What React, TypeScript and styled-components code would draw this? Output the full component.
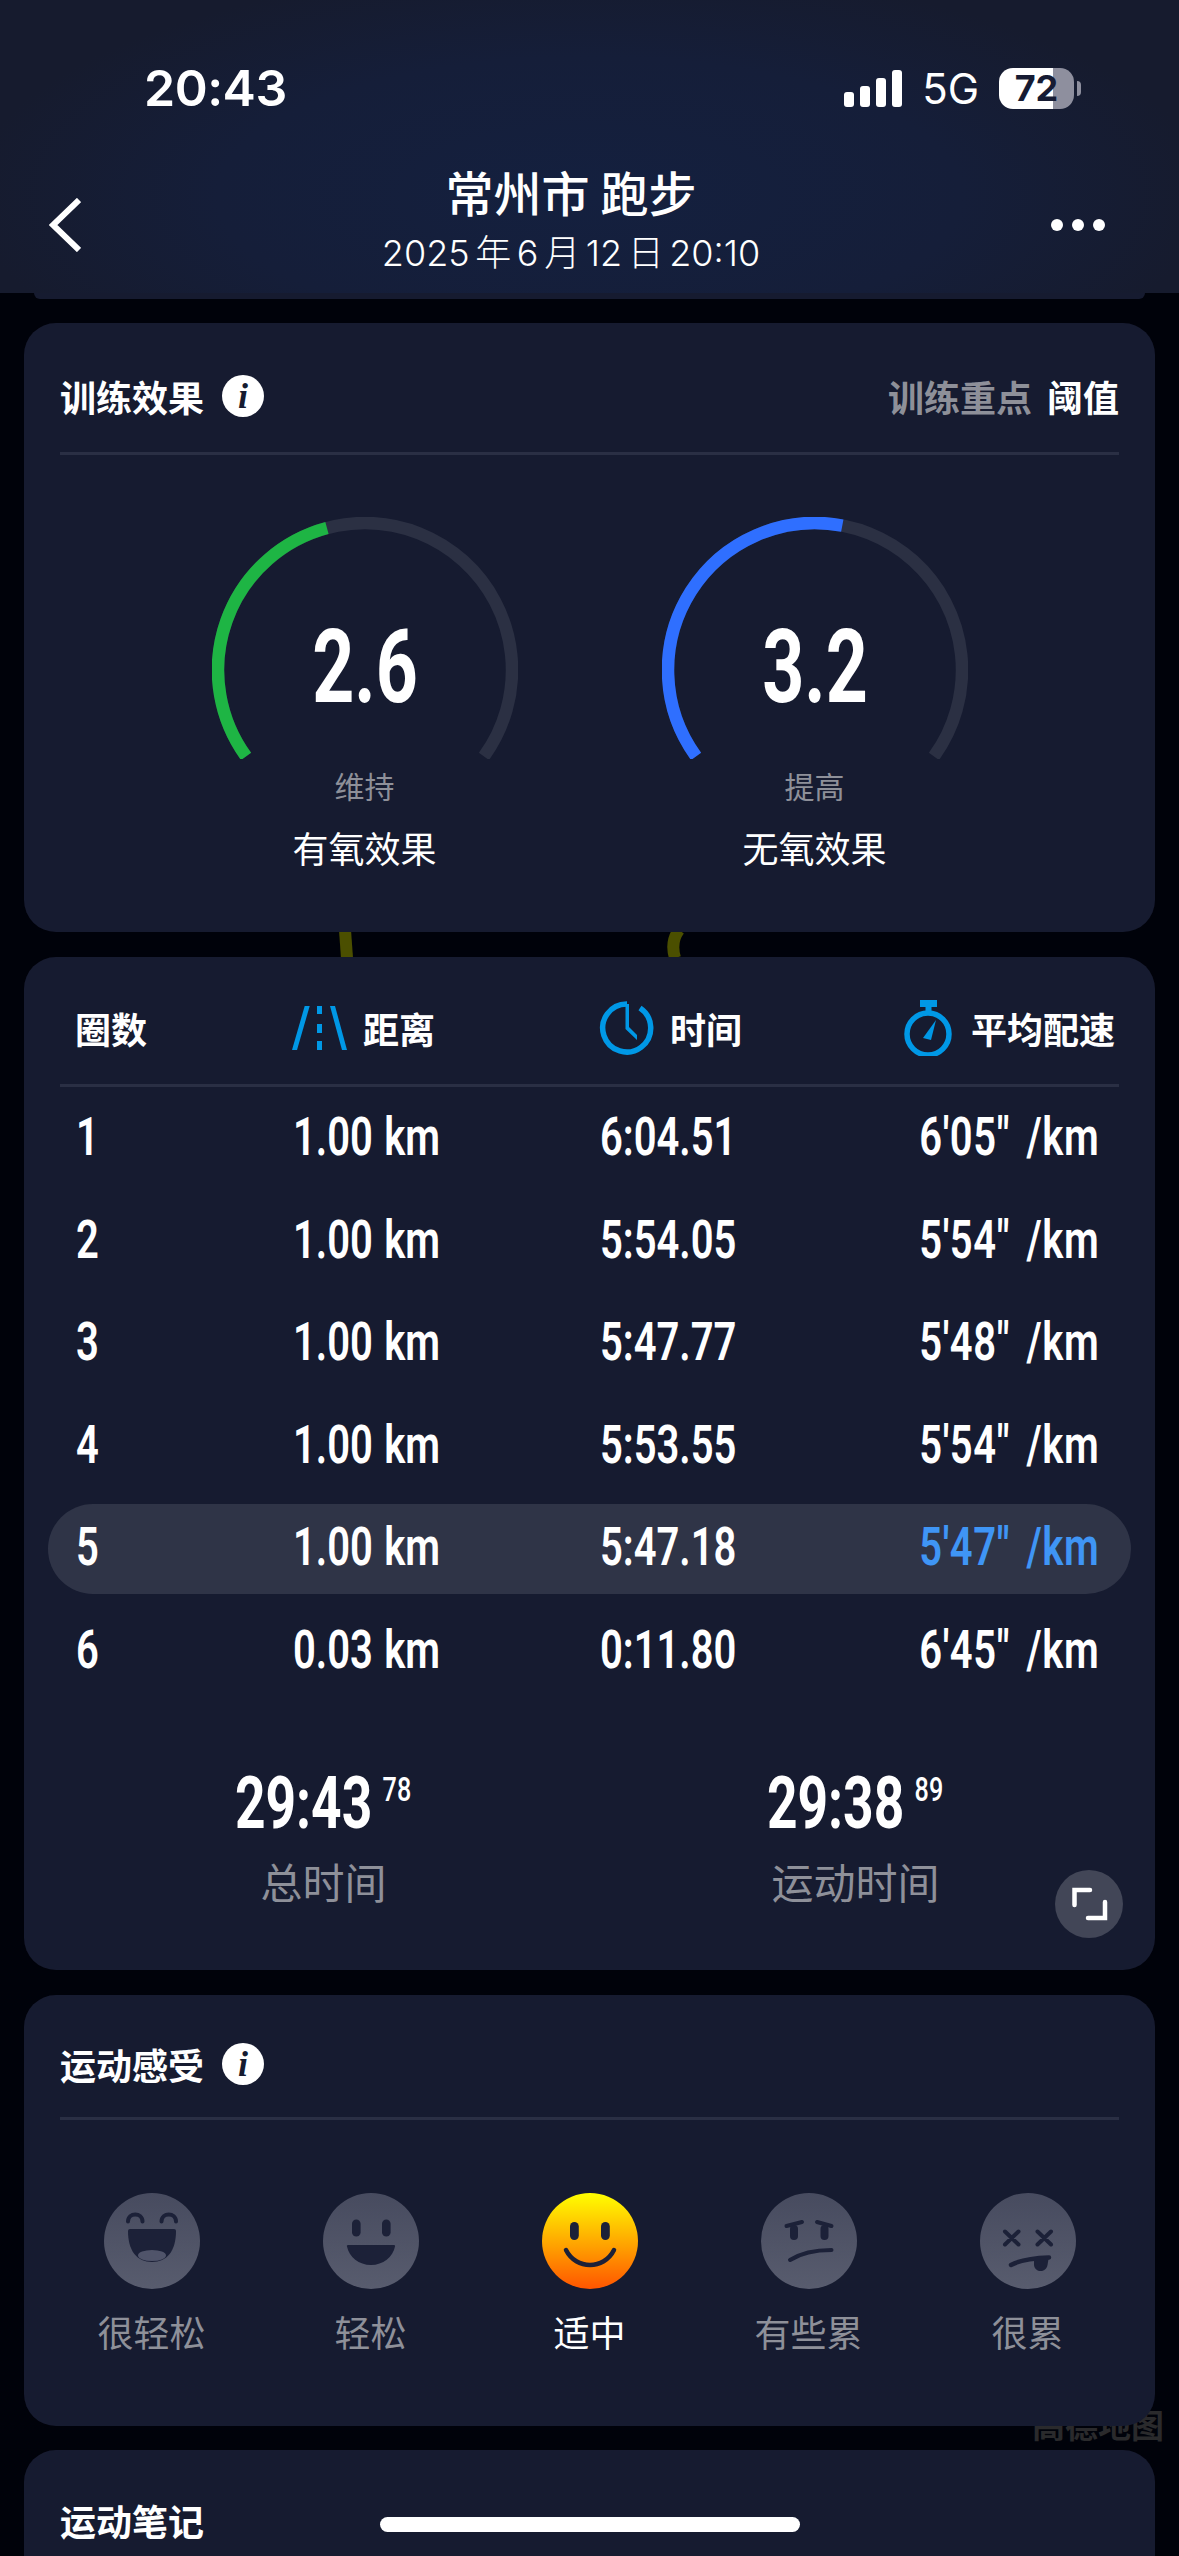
import styled, { createGlobalStyle } from "styled-components";

const CJK = `"Noto Sans CJK SC", "Noto Sans", sans-serif`;
const NUM = `Roboto, "Liberation Sans", sans-serif`;
const GREY = "#8e9099";

const GlobalStyle = createGlobalStyle`
  html, body { margin: 0; padding: 0; background: #00020a; }
  * { box-sizing: border-box; }
`;

const Page = styled.div`
  position: relative;
  width: 1179px;
  height: 2556px;
  overflow: hidden;
  background: #00020a;
  font-family: ${CJK};
  color: #fff;
`;

/* ---- map that shows through between the cards ---- */
const MapTraces = styled.svg`
  position: absolute;
  left: 328px;
  top: 930px;
`;

const MapLabel = styled.div`
  position: absolute;
  left: 1032px;
  top: 2402px;
  font-size: 33px;
  line-height: 44px;
  font-weight: 700;
  color: #2a2a2c;
  white-space: nowrap;
`;

/* ---- top bar ---- */
const Header = styled.header`
  position: relative;
  z-index: 2;
  height: 293px;
  padding-top: 58px;
  background: radial-gradient(ellipse 620px 230px at 50% 195px, #14203f 0%, #151e39 60%, #161b2e 100%);
`;

const HeaderPeek = styled.div`
  position: relative;
  z-index: 1;
  height: 6px;
  margin: 0 34px;
  background: #161b30;
  border-radius: 0 0 12px 12px;
`;

const StatusBar = styled.div`
  display: flex;
  align-items: center;
  justify-content: space-between;
  height: 60px;
  padding: 0 105px 0 144px;
`;

const Clock = styled.span`
  font-family: Inter, sans-serif;
  font-size: 50px;
  font-weight: 600;
  letter-spacing: -0.5px;
`;

const StatusIcons = styled.div`
  display: flex;
  align-items: center;
`;

const SignalBars = styled.div`
  display: flex;
  align-items: flex-end;
  gap: 6px;
  height: 37px;
`;

const SignalBar = styled.i<{ $h: number }>`
  display: block;
  width: 10px;
  height: ${({ $h }) => $h}px;
  background: #fff;
  border-radius: 3px;
`;

const Network = styled.span`
  margin: 0 20px;
  font-family: Inter, sans-serif;
  font-size: 42px;
  font-weight: 400;
`;

const Battery = styled.div`
  position: relative;
  width: 75px;
  height: 41px;
  border-radius: 14px;
  background: linear-gradient(90deg, #fff 0 54px, #8e8f9e 54px);
  color: #161b33;
  font-family: Inter, sans-serif;
  font-size: 36px;
  font-weight: 700;
  line-height: 41px;
  text-align: center;

  &::after {
    content: "";
    position: absolute;
    left: 78px;
    top: 13px;
    width: 4px;
    height: 15px;
    border-radius: 0 8px 8px 0;
    background: #8e8f9e;
  }
`;

const Nav = styled.nav`
  display: flex;
  align-items: center;
  justify-content: space-between;
  height: 122px;
  margin-top: 46px;
  padding: 0 74px 0 49px;
`;

const NavTitle = styled.div`
  margin: -4px 0 0 10px;
  text-align: center;
`;

const City = styled.div`
  margin-top: -2px;
  font-size: 48px;
  line-height: 60px;
  font-weight: 500;
`;

const NavDate = styled.div`
  margin-top: 2px;
  font-family: Inter, ${CJK};
  font-size: 36px;
  line-height: 60px;
  font-weight: 300;
  word-spacing: -4.5px;
`;

const Dots = styled.div`
  display: flex;
  gap: 9px;
`;

const Dot = styled.i`
  display: block;
  width: 12px;
  height: 12px;
  border-radius: 50%;
  background: #fff;
`;

/* ---- cards ---- */
const Cards = styled.main`
  position: relative;
  z-index: 1;
  display: flex;
  flex-direction: column;
  gap: 24.5px;
  margin: 24px 24px 0;
`;

const Card = styled.section<{ $pb?: number }>`
  position: relative;
  padding: 0 36px ${({ $pb }) => $pb ?? 0}px;
  background: #161b30;
  border-radius: 32px;
`;

const TitleRow = styled.div<{ $h: number; $line?: boolean }>`
  display: flex;
  align-items: center;
  justify-content: space-between;
  height: ${({ $h }) => $h}px;
  padding-top: 16px;
  border-bottom: 3px solid ${({ $line }) => ($line === false ? "transparent" : "#2a2f44")};
`;

const TitleLeft = styled.div`
  display: flex;
  align-items: center;
  gap: 18px;
`;

const CardTitle = styled.h2`
  margin: 0;
  font-size: 36px;
  line-height: 50px;
  font-weight: 700;
`;

const InfoBadge = styled.span`
  display: flex;
  align-items: center;
  justify-content: center;
  width: 42px;
  height: 42px;
  border-radius: 50%;
  background: #fff;
  color: #161b30;
  font-family: "Liberation Serif", serif;
  font-size: 36px;
  font-style: italic;
  font-weight: 700;
`;

const FocusLabel = styled.div`
  font-size: 36px;
  font-weight: 700;
  color: ${GREY};

  b {
    margin-left: 15px;
    font-weight: 700;
    color: #fff;
  }
`;

/* ---- gauges ---- */
const GaugeRow = styled.div`
  display: grid;
  grid-template-columns: 450px 450px;
  justify-content: center;
  margin-top: 62px;
`;

const Gauge = styled.div`
  display: flex;
  flex-direction: column;
  align-items: center;
`;

const Dial = styled.div`
  position: relative;
  width: 306px;
  height: 242px;
`;

const GaugeValue = styled.div`
  position: absolute;
  left: 0;
  right: 0;
  top: 90px;
  font-family: ${NUM};
  font-size: 102px;
  line-height: 120px;
  font-weight: 700;
  text-align: center;
  transform: scaleX(0.72);
`;

const GaugeStatus = styled.div`
  margin-top: 6px;
  font-size: 30px;
  line-height: 40px;
  color: ${GREY};
`;

const GaugeName = styled.div`
  margin-top: 17px;
  font-size: 36px;
  line-height: 50px;
`;

/* ---- lap table ---- */
const TableHead = styled.div`
  display: grid;
  grid-template-columns: 217px 307px 1fr auto;
  align-items: center;
  height: 130px;
  padding: 16px 4px 0 15px;
  border-bottom: 3px solid #2a2f44;
`;

const HeadCell = styled.div`
  display: flex;
  align-items: center;
  gap: 15px;
  font-size: 36px;
  font-weight: 700;
`;

const Laps = styled.div`
  display: flex;
  flex-direction: column;
  gap: 12.5px;
  margin: 7px -12px 0;
`;

const Lap = styled.div<{ $active?: boolean }>`
  display: grid;
  grid-template-columns: 217px 307px 1fr auto;
  align-items: center;
  height: 90px;
  padding: 0 32px 3px 28px;
  border-radius: 45px;
  background: ${({ $active }) => ($active ? "#2f3447" : "transparent")};
`;

const Narrow = styled.span<{ $right?: boolean; $best?: boolean }>`
  display: inline-block;
  justify-self: ${({ $right }) => ($right ? "end" : "start")};
  font-family: ${NUM};
  font-size: 54px;
  line-height: 60px;
  font-weight: 600;
  white-space: pre;
  word-spacing: ${({ $right }) => ($right ? 8 : 2)}px;
  letter-spacing: ${({ $right }) => ($right ? 0.8 : 0)}px;
  color: ${({ $best }) => ($best ? "#3f95f5" : "#fff")};
  transform: scaleX(0.74);
  transform-origin: ${({ $right }) => ($right ? "right" : "left")} center;
`;

const Totals = styled.div`
  display: grid;
  grid-template-columns: 532px 532px;
  justify-content: center;
  margin-top: 65px;
`;

const Total = styled.div`
  display: flex;
  flex-direction: column;
  align-items: center;
`;

const TotalValue = styled.div`
  display: flex;
  align-items: flex-start;
  height: 80px;
  font-family: ${NUM};
  font-size: 72px;
  line-height: 86px;
  font-weight: 700;
  transform: scaleX(0.74);
`;

const TotalHundredths = styled.span`
  margin: -15px 0 0 14px;
  font-size: 34px;
  font-weight: 500;
`;

const TotalLabel = styled.div`
  margin-top: 15px;
  font-size: 42px;
  line-height: 50px;
  color: ${GREY};
`;

const ExpandButton = styled.button`
  position: absolute;
  right: 32px;
  bottom: 32px;
  display: block;
  width: 68px;
  height: 68px;
  padding: 0;
  border: none;
  border-radius: 50%;
  background: #424657;
`;

/* ---- feeling ---- */
const Faces = styled.div`
  display: grid;
  grid-template-columns: repeat(5, 219px);
  margin: 73px -20px 0 -18px;
`;

const FaceItem = styled.div<{ $active?: boolean }>`
  display: flex;
  flex-direction: column;
  align-items: center;
  gap: 17px;
  font-size: 36px;
  line-height: 50px;
  color: ${({ $active }) => ($active ? "#fff" : GREY)};
`;

const HomeIndicator = styled.div`
  position: absolute;
  z-index: 3;
  left: 380px;
  bottom: 24px;
  width: 420px;
  height: 15px;
  border-radius: 8px;
  background: #fff;
`;

const polar = (angle: number, r = 147, c = 153) => {
  const a = (angle * Math.PI) / 180;
  return `${c + r * Math.sin(a)} ${c - r * Math.cos(a)}`;
};

const arc = (from: number, to: number) =>
  `M ${polar(from)} A 147 147 0 ${to - from > 180 ? 1 : 0} 1 ${polar(to)}`;

function GaugeDial({ value, end, color }: { value: string; end: number; color: string }) {
  return (
    <Dial>
      <svg width="306" height="242" viewBox="0 0 306 242" fill="none" strokeWidth="12.5">
        <path d={arc(-126, 126)} stroke="#2b3043" />
        <path d={arc(-126, end)} stroke={color} />
      </svg>
      <GaugeValue>{value}</GaugeValue>
    </Dial>
  );
}

const RoadIcon = () => (
  <svg width="56" height="44" viewBox="0 0 56 44" fill="#0098e6">
    <path d="M12.7 0H17.7L5 44H0Z" />
    <path d="M38 0H43L55 44H50Z" />
    <path d="M25 0h5v8h-5zM25 18h5v9h-5zM25 35h5v9h-5z" />
  </svg>
);

const ClockIcon = () => (
  <svg width="56" height="56" viewBox="0 0 56 56" fill="none">
    <path d="M28 4A24 24 0 1 0 41 8" stroke="#0098e6" strokeWidth="5.5" />
    <path d="M26.5 4V29L38 40V35L30 27V4Z" fill="#0098e6" />
  </svg>
);

const StopwatchIcon = () => (
  <svg width="53" height="56" viewBox="0 0 53 56" fill="none">
    <rect x="17" y="0" width="17" height="7" fill="#0098e6" />
    <rect x="22.5" y="6" width="6" height="8" fill="#0098e6" />
    <circle cx="25" cy="34" r="21" stroke="#0098e6" strokeWidth="5.5" />
    <path d="M20 38L33 20L28 40Z" fill="#0098e6" />
  </svg>
);

const ExpandIcon = () => (
  <svg width="68" height="68" viewBox="0 0 68 68" fill="none" stroke="#fff" strokeWidth="4.5" strokeLinecap="round">
    <path d="M19.5 35V20H35" />
    <path d="M50 32V48H33" />
  </svg>
);

const INK = "#1c2138";

function FaceIcon({ kind }: { kind: number }) {
  const fill = kind === 2 ? "url(#faceGold)" : "url(#faceGrey)";
  return (
    <svg width="96" height="96" viewBox="0 0 96 96" fill="none">
      <defs>
        <linearGradient id="faceGrey" x1="0" y1="0" x2="0" y2="1">
          <stop offset="0" stopColor="#474b5f" />
          <stop offset="1" stopColor="#585c6e" />
        </linearGradient>
        <linearGradient id="faceGold" x1="0" y1="0" x2="0" y2="1">
          <stop offset="0" stopColor="#ffff00" />
          <stop offset="1" stopColor="#ff5500" />
        </linearGradient>
      </defs>
      <circle cx="48" cy="48" r="48" fill={fill} />
      {kind === 0 && (
        <>
          <path d="M24 28.5C24 19 38.5 19 38.5 28.5M57.5 28.5C57.5 19 72 19 72 28.5" stroke={INK} strokeWidth="4" strokeLinecap="round" />
          <path d="M24 38a2 2 0 0 1 2-2H70a2 2 0 0 1 2 2C72 58 63 69 48 69S24 58 24 38Z" fill={INK} />
          <ellipse cx="48" cy="62.5" rx="14" ry="5.5" fill="#50546a" />
        </>
      )}
      {kind === 1 && (
        <>
          <rect x="29" y="26.5" width="8.6" height="17" rx="4.3" fill={INK} />
          <rect x="59" y="26.5" width="8.6" height="17" rx="4.3" fill={INK} />
          <path d="M25 52H71a1 1 0 0 1 1 1.5C70 64 60 72 48 72S26 64 24 53.5A1 1 0 0 1 25 52Z" fill={INK} />
        </>
      )}
      {kind === 2 && (
        <>
          <rect x="28" y="29" width="8.8" height="18" rx="4.4" fill={INK} />
          <rect x="59" y="29" width="8.8" height="18" rx="4.4" fill={INK} />
          <path d="M24 57C34 77 62 77 72 57" stroke={INK} strokeWidth="4.5" strokeLinecap="round" />
        </>
      )}
      {kind === 3 && (
        <>
          <path d="M25.5 33L41 29M56 29L70.5 33" stroke={INK} strokeWidth="4" strokeLinecap="round" />
          <rect x="29" y="32" width="8" height="15" rx="4" fill={INK} />
          <rect x="59.5" y="32" width="8" height="15" rx="4" fill={INK} />
          <path d="M29 67C40 60 55 57 70.5 57" stroke={INK} strokeWidth="4" strokeLinecap="round" />
        </>
      )}
      {kind === 4 && (
        <>
          <path d="M25 38.5L38.5 51.5M38.5 38.5L25 51.5M57.5 38.5L71 51.5M71 38.5L57.5 51.5" stroke={INK} strokeWidth="4" strokeLinecap="round" />
          <path d="M31 72C40 67 55 65 69 64.5" stroke={INK} strokeWidth="4.5" strokeLinecap="round" />
          <path d="M54 66H68.5L67.5 72C66 80 55 80 54 72Z" fill={INK} />
        </>
      )}
    </svg>
  );
}

const laps = [
  ["1", "1.00 km", "6:04.51", `6'05" /km`],
  ["2", "1.00 km", "5:54.05", `5'54" /km`],
  ["3", "1.00 km", "5:47.77", `5'48" /km`],
  ["4", "1.00 km", "5:53.55", `5'54" /km`],
  ["5", "1.00 km", "5:47.18", `5'47" /km`],
  ["6", "0.03 km", "0:11.80", `6'45" /km`],
];

const feelings = ["很轻松", "轻松", "适中", "有些累", "很累"];

export default function App() {
  return (
    <Page>
      <GlobalStyle />

      {/* map behind the cards */}
      <MapTraces width="360" height="30" viewBox="0 0 360 30" fill="none" stroke="#4b4f00" strokeWidth="12">
        <path d="M17 0L19 28" />
        <path d="M351 0C345 8 344 18 347 28" />
      </MapTraces>
      <MapLabel>高德地图</MapLabel>

      <Header>
        <StatusBar>
          <Clock>20:43</Clock>
          <StatusIcons>
            <SignalBars>
              <SignalBar $h={15} />
              <SignalBar $h={21} />
              <SignalBar $h={29} />
              <SignalBar $h={37} />
            </SignalBars>
            <Network>5G</Network>
            <Battery>72</Battery>
          </StatusIcons>
        </StatusBar>
        <Nav>
          <svg width="32" height="54" viewBox="0 0 32 54" fill="none" stroke="#fff" strokeWidth="6">
            <path d="M30 2L4 27L30 52" />
          </svg>
          <NavTitle>
            <City>常州市 跑步</City>
            <NavDate>2025 年 6 月 12 日 20:10</NavDate>
          </NavTitle>
          <Dots>
            <Dot />
            <Dot />
            <Dot />
          </Dots>
        </Nav>
      </Header>
      <HeaderPeek />

      <Cards>
        {/* training effect */}
        <Card $pb={60}>
          <TitleRow $h={132}>
            <TitleLeft>
              <CardTitle>训练效果</CardTitle>
              <InfoBadge>i</InfoBadge>
            </TitleLeft>
            <FocusLabel>
              训练重点<b>阈值</b>
            </FocusLabel>
          </TitleRow>
          <GaugeRow>
            <Gauge>
              <GaugeDial value="2.6" end={-15} color="#1eb544" />
              <GaugeStatus>维持</GaugeStatus>
              <GaugeName>有氧效果</GaugeName>
            </Gauge>
            <Gauge>
              <GaugeDial value="3.2" end={10.7} color="#2f6fff" />
              <GaugeStatus>提高</GaugeStatus>
              <GaugeName>无氧效果</GaugeName>
            </Gauge>
          </GaugeRow>
        </Card>

        {/* laps */}
        <Card $pb={64}>
          <TableHead>
            <HeadCell>圈数</HeadCell>
            <HeadCell>
              <RoadIcon />
              距离
            </HeadCell>
            <HeadCell>
              <ClockIcon />
              时间
            </HeadCell>
            <HeadCell>
              <StopwatchIcon />
              平均配速
            </HeadCell>
          </TableHead>
          <Laps>
            {laps.map((lap) => (
              <Lap key={lap[0]} $active={lap[0] === "5"}>
                <Narrow>{lap[0]}</Narrow>
                <Narrow>{lap[1]}</Narrow>
                <Narrow>{lap[2]}</Narrow>
                <Narrow $right $best={lap[0] === "5"}>
                  {lap[3]}
                </Narrow>
              </Lap>
            ))}
          </Laps>
          <Totals>
            <Total>
              <TotalValue>
                29:43<TotalHundredths>78</TotalHundredths>
              </TotalValue>
              <TotalLabel>总时间</TotalLabel>
            </Total>
            <Total>
              <TotalValue>
                29:38<TotalHundredths>89</TotalHundredths>
              </TotalValue>
              <TotalLabel>运动时间</TotalLabel>
            </Total>
          </Totals>
          <ExpandButton aria-label="expand">
            <ExpandIcon />
          </ExpandButton>
        </Card>

        {/* feeling */}
        <Card $pb={70}>
          <TitleRow $h={125}>
            <TitleLeft>
              <CardTitle>运动感受</CardTitle>
              <InfoBadge>i</InfoBadge>
            </TitleLeft>
          </TitleRow>
          <Faces>
            {feelings.map((name, i) => (
              <FaceItem key={name} $active={i === 2}>
                <FaceIcon kind={i} />
                {name}
              </FaceItem>
            ))}
          </Faces>
        </Card>

        {/* notes, cut off by the screen */}
        <Card $pb={40}>
          <TitleRow $h={126} $line={false}>
            <CardTitle>运动笔记</CardTitle>
          </TitleRow>
        </Card>
      </Cards>

      <HomeIndicator />
    </Page>
  );
}
